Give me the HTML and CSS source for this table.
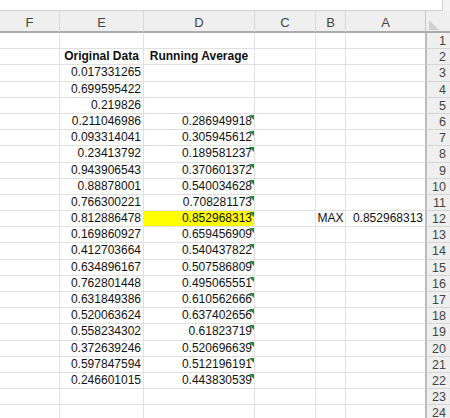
FILE: index.html
```html
<!DOCTYPE html>
<html>
<head>
<meta charset="utf-8">
<link rel="stylesheet" href="styles.css">
</head>
<body>
<div class="app">
  <div class="topbar"><div class="formula"></div></div>
  <div class="sheet">
    <div class="hd">F</div><div class="hd">E</div><div class="hd">D</div><div class="hd">C</div><div class="hd">B</div><div class="hd">A</div><div class="hd corner"><span class="tri"></span></div>

    <div class="c"></div><div class="c"></div><div class="c"></div><div class="c"></div><div class="c"></div><div class="c"></div><div class="rn">1</div>
    <div class="c"></div><div class="c b">Original Data</div><div class="c b">Running Average</div><div class="c"></div><div class="c"></div><div class="c"></div><div class="rn">2</div>
    <div class="c"></div><div class="c n">0.017331265</div><div class="c"></div><div class="c"></div><div class="c"></div><div class="c"></div><div class="rn">3</div>
    <div class="c"></div><div class="c n">0.699595422</div><div class="c"></div><div class="c"></div><div class="c"></div><div class="c"></div><div class="rn">4</div>
    <div class="c"></div><div class="c n">0.219826</div><div class="c"></div><div class="c"></div><div class="c"></div><div class="c"></div><div class="rn">5</div>
    <div class="c"></div><div class="c n">0.211046986</div><div class="c n f">0.286949918</div><div class="c"></div><div class="c"></div><div class="c"></div><div class="rn">6</div>
    <div class="c"></div><div class="c n">0.093314041</div><div class="c n f">0.305945612</div><div class="c"></div><div class="c"></div><div class="c"></div><div class="rn">7</div>
    <div class="c"></div><div class="c n">0.23413792</div><div class="c n f">0.189581237</div><div class="c"></div><div class="c"></div><div class="c"></div><div class="rn">8</div>
    <div class="c"></div><div class="c n">0.943906543</div><div class="c n f">0.370601372</div><div class="c"></div><div class="c"></div><div class="c"></div><div class="rn">9</div>
    <div class="c"></div><div class="c n">0.88878001</div><div class="c n f">0.540034628</div><div class="c"></div><div class="c"></div><div class="c"></div><div class="rn">10</div>
    <div class="c"></div><div class="c n">0.766300221</div><div class="c n f">0.708281173</div><div class="c"></div><div class="c"></div><div class="c"></div><div class="rn">11</div>
    <div class="c"></div><div class="c n">0.812886478</div><div class="c n f hl">0.852968313</div><div class="c"></div><div class="c mid">MAX</div><div class="c n">0.852968313</div><div class="rn">12</div>
    <div class="c"></div><div class="c n">0.169860927</div><div class="c n f">0.659456909</div><div class="c"></div><div class="c"></div><div class="c"></div><div class="rn">13</div>
    <div class="c"></div><div class="c n">0.412703664</div><div class="c n f">0.540437822</div><div class="c"></div><div class="c"></div><div class="c"></div><div class="rn">14</div>
    <div class="c"></div><div class="c n">0.634896167</div><div class="c n f">0.507586809</div><div class="c"></div><div class="c"></div><div class="c"></div><div class="rn">15</div>
    <div class="c"></div><div class="c n">0.762801448</div><div class="c n f">0.495065551</div><div class="c"></div><div class="c"></div><div class="c"></div><div class="rn">16</div>
    <div class="c"></div><div class="c n">0.631849386</div><div class="c n f">0.610562666</div><div class="c"></div><div class="c"></div><div class="c"></div><div class="rn">17</div>
    <div class="c"></div><div class="c n">0.520063624</div><div class="c n f">0.637402656</div><div class="c"></div><div class="c"></div><div class="c"></div><div class="rn">18</div>
    <div class="c"></div><div class="c n">0.558234302</div><div class="c n f">0.61823719</div><div class="c"></div><div class="c"></div><div class="c"></div><div class="rn">19</div>
    <div class="c"></div><div class="c n">0.372639246</div><div class="c n f">0.520696639</div><div class="c"></div><div class="c"></div><div class="c"></div><div class="rn">20</div>
    <div class="c"></div><div class="c n">0.597847594</div><div class="c n f">0.512196191</div><div class="c"></div><div class="c"></div><div class="c"></div><div class="rn">21</div>
    <div class="c"></div><div class="c n">0.246601015</div><div class="c n f">0.443830539</div><div class="c"></div><div class="c"></div><div class="c"></div><div class="rn">22</div>
    <div class="c"></div><div class="c"></div><div class="c"></div><div class="c"></div><div class="c"></div><div class="c"></div><div class="rn">23</div>
    <div class="c"></div><div class="c"></div><div class="c"></div><div class="c"></div><div class="c"></div><div class="c"></div><div class="rn">24</div>
  </div>
</div>
</body>
</html>
```

FILE: styles.css
```css
* { box-sizing: border-box; }
html, body { margin: 0; padding: 0; background: #fff; }
body { font-family: "Liberation Sans", Arial, sans-serif; overflow: hidden; }
.app { width: 450px; height: 418px; overflow: hidden; }
.topbar { height: 11px; background: #f3f3f3; }
.formula { width: 443px; height: 11px; background: #fff; border-right: 1px solid #d2d2d2; border-bottom: 1px solid #d2d2d2; }
.sheet {
  display: grid;
  grid-template-columns: 59px 84px 111px 61px 30px 80px 25px;
  grid-template-rows: 22px;
  grid-auto-rows: 16.2px;
}
.hd {
  background: #efefef;
  border-left: 1px solid #d9d9d9;
  border-bottom: 2px solid #ababab;
  color: #444;
  font-size: 13px;
  text-align: center;
  line-height: 22px;
  padding-top: 1px;
}
.hd:first-child { border-left: none; }
.corner { position: relative; border-left: 1px solid #c6c6c6; }
.tri {
  position: absolute; left: 3px; bottom: 1px;
  width: 0; height: 0;
  border-bottom: 10px solid #cfcfcf;
  border-right: 10px solid transparent;
}
.c {
  position: relative;
  border-left: 1px solid #e1e1e1;
  border-bottom: 1px solid #e1e1e1;
  font-size: 12px;
  line-height: 15px;
  color: #111;
  white-space: nowrap;
  padding: 0 2px;
}
.sheet > .c:nth-child(7n+1) { border-left: none; }
.n { text-align: right; }
.b { font-weight: bold; text-align: center; padding: 0; }
.mid { text-align: center; padding: 0; }
.hl { background: #ffff00; }
.f::after {
  content: "";
  position: absolute; right: 0; top: 1px;
  width: 0; height: 0;
  border-top: 5px solid #1c8a36;
  border-left: 5px solid transparent;
}
.rn {
  background: #efefef;
  border-left: 2px solid #bcbcbc;
  border-bottom: 1px solid #d6d6d6;
  color: #444;
  font-size: 12.5px;
  text-align: right;
  padding-right: 4px;
  line-height: 16px;
}
```
